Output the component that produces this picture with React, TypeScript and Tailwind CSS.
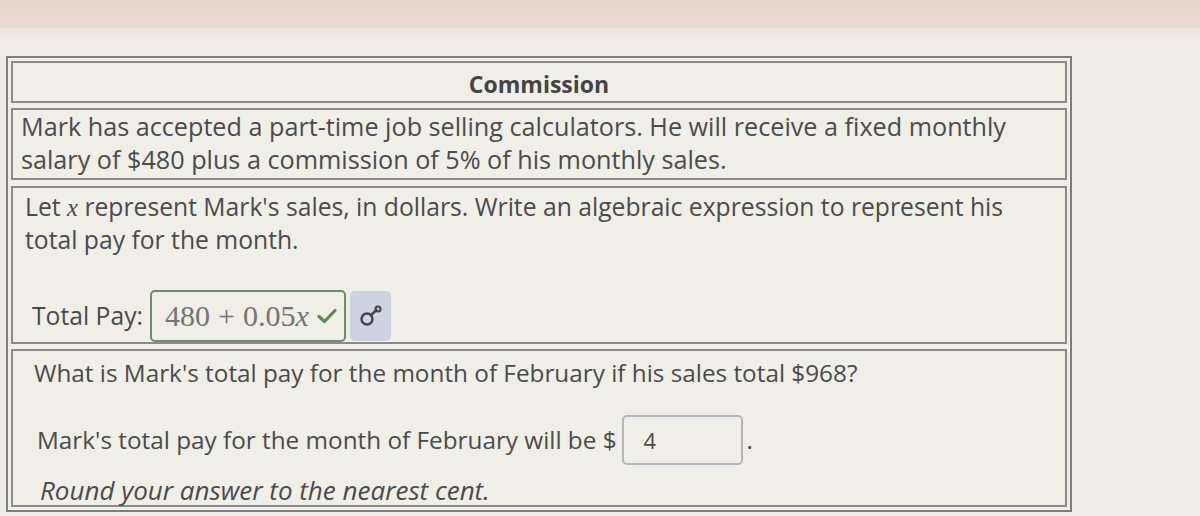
import React from "react";

export default function App() {
  const font = { fontFamily: '"Open Sans", "Noto Sans", sans-serif' };
  const serif = { fontFamily: '"Liberation Serif", "DejaVu Serif", serif' };
  return (
    <div
      className="w-[1200px] h-[516px] overflow-hidden bg-[#eeece4] text-[#4b4b4b]"
      style={font}
    >
      <div className="h-[28px] bg-gradient-to-b from-[#e7d5c8] to-[#ead9cd]" />
      <div className="h-[16px] bg-gradient-to-b from-[#ece3da] to-[#efede6]" />
      <div className="ml-[6px] mt-[12px] w-[1066px] border-2 border-[#7d7d80] p-[3px] flex flex-col bg-[#efeee7]">
        {/* Header */}
        <div className="h-[42px] border-2 border-[#8a8a8d] flex items-center justify-center pt-[4px]">
          <span className="text-[23px] leading-[32px] font-bold text-[#444]">Commission</span>
        </div>
        {/* Row 2 */}
        <div className="mt-[5px] h-[72px] border-2 border-[#8a8a8d] pl-[8px] text-[25.2px] leading-[33px]">
          <div>Mark has accepted a part-time job selling calculators. He will receive a fixed monthly</div>
          <div>salary of $480 plus a commission of 5% of his monthly sales.</div>
        </div>
        {/* Row 3 */}
        <div className="mt-[6px] h-[158px] border-2 border-[#8a8a8d] pl-[12px] pt-[3px] text-[24.7px] leading-[32px]">
          <div>
            Let{" "}
            <span className="italic" style={serif}>
              x
            </span>{" "}
            represent Mark's sales, in dollars. Write an algebraic expression to represent his
          </div>
          <div>total pay for the month.</div>
          <div className="mt-[34px] pl-[7px] flex items-center">
            <span className="mr-[7px]">Total Pay:</span>
            <div className="h-[52px] w-[196px] rounded-[5px] border-2 border-[#6f8c6c] flex items-center pl-[13px] bg-[#efefe8]">
              <span className="text-[30px] leading-none text-[#747474] flex items-center" style={serif}>
                480<span className="mx-[8px]">+</span>0.05<span className="italic">x</span>
              </span>
              <svg className="ml-[7px]" width="22" height="18" viewBox="0 0 22 18">
                <path d="M3 9.5 L8.5 14.5 L19 3.5" fill="none" stroke="#5a8a4e" strokeWidth="3.2" strokeLinecap="round" strokeLinejoin="round" />
              </svg>
            </div>
            <div className="ml-[4px] h-[50px] w-[41px] rounded-[5px] bg-[#cdd3e0] flex items-center justify-center">
              <svg width="24" height="22" viewBox="0 0 24 22">
                <circle cx="8" cy="14" r="5.5" fill="none" stroke="#444" strokeWidth="2.4" />
                <path d="M12 10 L17.5 5" fill="none" stroke="#444" strokeWidth="2.4" strokeLinecap="round" />
                <circle cx="19" cy="4" r="2.6" fill="none" stroke="#444" strokeWidth="2" />
              </svg>
            </div>
          </div>
        </div>
        {/* Row 4 */}
        <div className="mt-[5px] h-[158px] border-2 border-[#8a8a8d] pl-[21px] pt-[6px] text-[24.3px] leading-[32px]">
          <div>What is Mark's total pay for the month of February if his sales total $968?</div>
          <div className="mt-[26px] pl-[3px] flex items-center">
            <span>Mark's total pay for the month of February will be $</span>
            <div className="ml-[5px] h-[50px] w-[121px] rounded-[5px] border-2 border-[#b3b6bb] flex items-center pl-[20px] bg-[#efefe8]">
              <span className="text-[22px]">4</span>
            </div>
            <span className="ml-[4px]">.</span>
          </div>
          <div className="mt-[9px] pl-[6px] italic text-[26px]">Round your answer to the nearest cent.</div>
        </div>
      </div>
    </div>
  );
}
